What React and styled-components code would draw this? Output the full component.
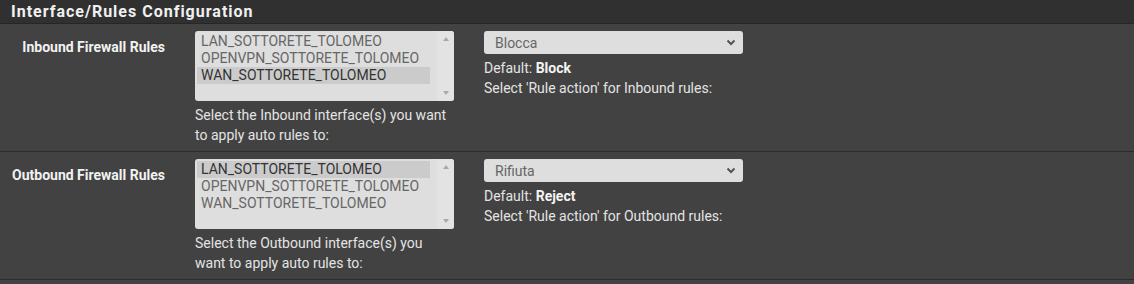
import React from "react";
import styled, { createGlobalStyle } from "styled-components";

const Global = createGlobalStyle`
  html, body { margin: 0; padding: 0; background: #424242; }
  body { font-family: Roboto, "Noto Sans", sans-serif; }
`;

const Panel = styled.div`
  width: 1134px;
  background: #424242;
  color: #e0e0e0;
`;

const Heading = styled.div`
  height: 23px;
  background: #303030;
  border-bottom: 1px solid #262626;
  display: flex;
  align-items: center;
  padding-left: 11px;
  font-size: 16px;
  font-weight: 700;
  letter-spacing: 1px;
  color: #f0f0f0;
`;

const Row = styled.div`
  display: grid;
  grid-template-columns: 180px 289px 289px 1fr;
  padding: 7px 0 6px;
  border-bottom: 1px solid #2c2c2c;
`;

const Label = styled.div`
  text-align: right;
  padding-right: 15px;
  padding-top: 8px;
  font-size: 14px;
  font-weight: 700;
  color: #f2f2f2;
`;

const Col = styled.div`
  padding: 0 15px;
`;

const ListBox = styled.div`
  height: 70px;
  background: #dedede;
  border-radius: 3px;
  display: flex;
  overflow: hidden;
`;

const Options = styled.div`
  flex: 1;
  padding: 2px 7px 0 2px;
`;

const Option = styled.div`
  height: 17px;
  line-height: 17px;
  font-size: 14px;
  padding-left: 4px;
  color: ${(p) => (p.$selected ? "#333" : "#666")};
  background: ${(p) => (p.$selected ? "#cbcbcb" : "transparent")};
`;

const ScrollBar = styled.div`
  width: 17px;
  display: flex;
  flex-direction: column;
  justify-content: space-between;
  align-items: center;
  padding: 6px 0;
  background: #e3e3e3;
`;

const Arrow = styled.div`
  width: 0;
  height: 0;
  border-left: 3.5px solid transparent;
  border-right: 3.5px solid transparent;
  ${(p) =>
    p.$down
      ? "border-top: 4px solid #a8a8a8;"
      : "border-bottom: 4px solid #a8a8a8;"}
`;

const Help = styled.div`
  margin-top: 4px;
  font-size: 14px;
  line-height: 20px;
  color: #e4e4e4;
`;

const Select = styled.div`
  height: 23px;
  background: #dedede;
  border-radius: 3px;
  display: flex;
  align-items: center;
  justify-content: space-between;
  padding: 0 7px 0 11px;
  font-size: 14px;
  color: #666;
`;

const ActionHelp = styled.div`
  margin-top: 4px;
  font-size: 14px;
  line-height: 20px;
  color: #e4e4e4;
  b { color: #f4f4f4; font-weight: 700; }
`;

const Chevron = () => (
  <svg width="10" height="7" viewBox="0 0 10 7">
    <path d="M1.5 1.5 L5 5 L8.5 1.5" fill="none" stroke="#555" strokeWidth="2" />
  </svg>
);

const ifaces = ["LAN_SOTTORETE_TOLOMEO", "OPENVPN_SOTTORETE_TOLOMEO", "WAN_SOTTORETE_TOLOMEO"];

const RuleRow = ({ label, selected, helpLines, action, def, actionHelp }) => (
  <Row>
    <Label>{label}</Label>
    <Col>
      <ListBox>
        <Options>
          {ifaces.map((n, i) => (
            <Option key={n} $selected={i === selected}>{n}</Option>
          ))}
        </Options>
        <ScrollBar>
          <Arrow />
          <Arrow $down />
        </ScrollBar>
      </ListBox>
      <Help>
        {helpLines.map((l) => (
          <div key={l}>{l}</div>
        ))}
      </Help>
    </Col>
    <Col>
      <Select>
        <span>{action}</span>
        <Chevron />
      </Select>
      <ActionHelp>
        <div>
          Default: <b>{def}</b>
        </div>
        <div>{actionHelp}</div>
      </ActionHelp>
    </Col>
    <div />
  </Row>
);

export default function App() {
  return (
    <>
      <Global />
      <Panel>
        <Heading>Interface/Rules Configuration</Heading>
        <RuleRow
          label="Inbound Firewall Rules"
          selected={2}
          helpLines={["Select the Inbound interface(s) you want", "to apply auto rules to:"]}
          action="Blocca"
          def="Block"
          actionHelp="Select 'Rule action' for Inbound rules:"
        />
        <RuleRow
          label="Outbound Firewall Rules"
          selected={0}
          helpLines={["Select the Outbound interface(s) you", "want to apply auto rules to:"]}
          action="Rifiuta"
          def="Reject"
          actionHelp="Select 'Rule action' for Outbound rules:"
        />
      </Panel>
    </>
  );
}
